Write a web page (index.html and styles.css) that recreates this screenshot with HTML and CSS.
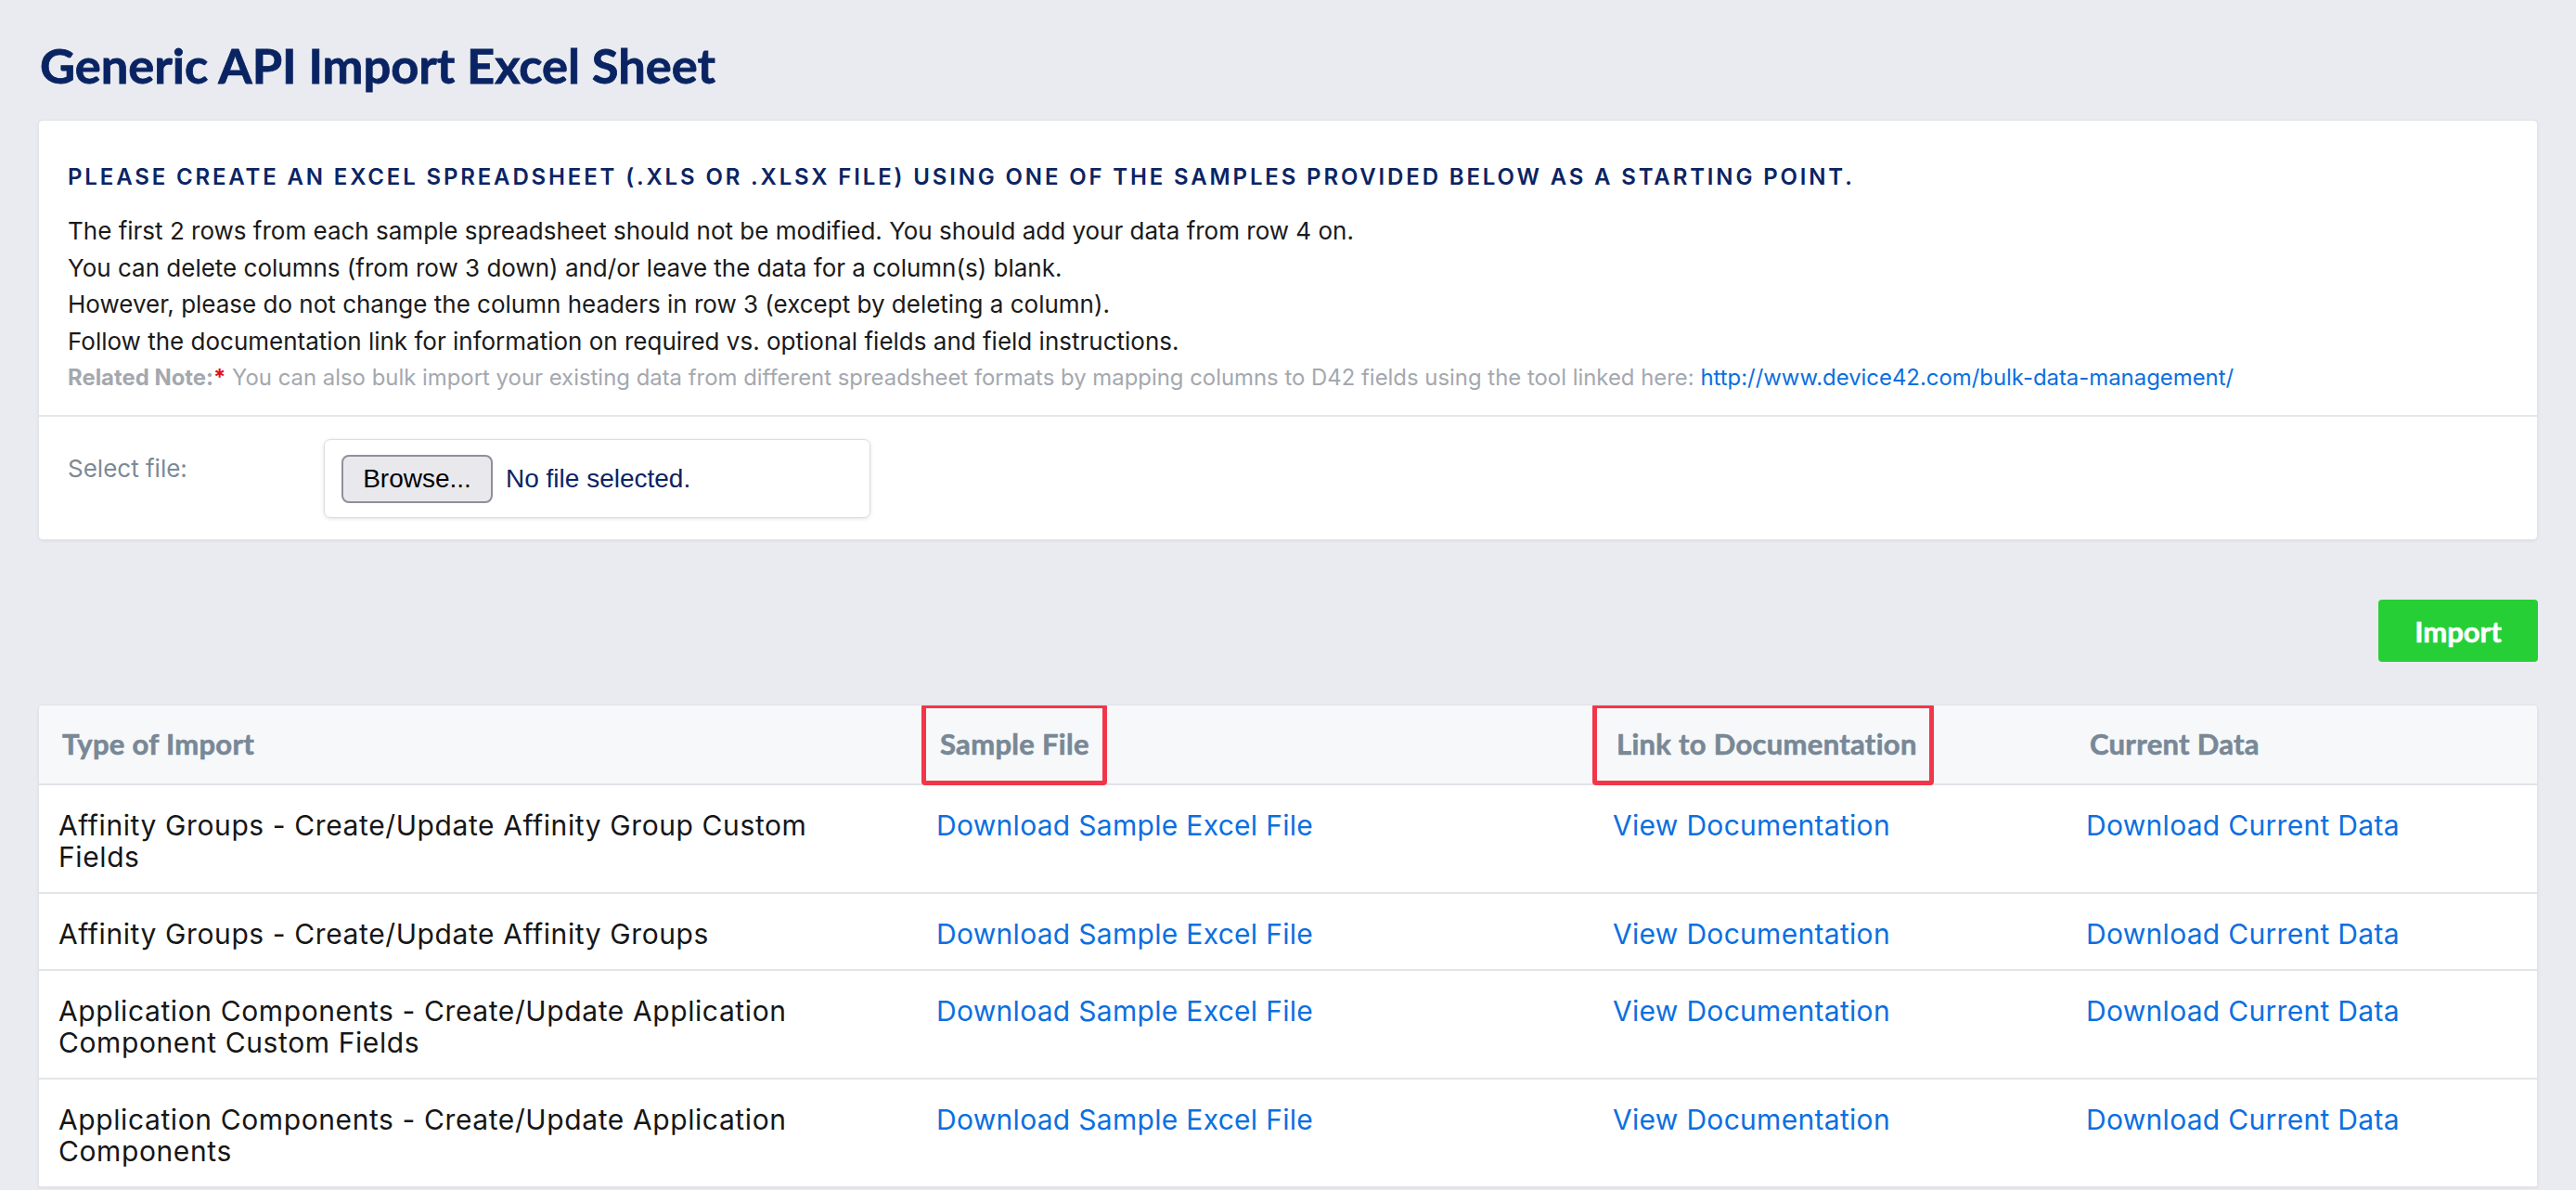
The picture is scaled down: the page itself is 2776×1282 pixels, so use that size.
FILE: index.html
```html
<!DOCTYPE html>
<html lang="en">
<head>
<meta charset="utf-8">
<title>Generic API Import Excel Sheet</title>
<link rel="stylesheet" href="styles.css">
</head>
<body>
<div class="page">
  <h1 class="title">Generic API Import Excel Sheet</h1>

  <section class="card info-card">
    <div class="info">
      <h2 class="info-heading">PLEASE CREATE AN EXCEL SPREADSHEET (.XLS OR .XLSX FILE) USING ONE OF THE SAMPLES PROVIDED BELOW AS A STARTING POINT.</h2>
      <p class="info-lines">The first 2 rows from each sample spreadsheet should not be modified. You should add your data from row 4 on.<br>You can delete columns (from row 3 down) and/or leave the data for a column(s) blank.<br>However, please do not change the column headers in row 3 (except by deleting a column).<br>Follow the documentation link for information on required vs. optional fields and field instructions.</p>
      <p class="note"><b class="note-label">Related Note:</b><span class="req">*</span> You can also bulk import your existing data from different spreadsheet formats by mapping columns to D42 fields using the tool linked here: <a class="note-link" href="#">http://www.device42.com/bulk-data-management/</a></p>
    </div>
    <div class="file-row">
      <label class="file-label">Select file:</label>
      <div class="file-box">
        <span class="browse">Browse...</span>
        <span class="file-status">No file selected.</span>
      </div>
    </div>
  </section>

  <div class="actions">
    <button class="import-btn" type="button">Import</button>
  </div>

  <section class="card table-card">
    <table class="imports">
      <colgroup>
        <col class="c1"><col class="c2"><col class="c3"><col class="c4">
      </colgroup>
      <thead>
        <tr>
          <th>Type of Import</th>
          <th>Sample File<span class="hl hl-sample"></span></th>
          <th>Link to Documentation<span class="hl hl-doc"></span></th>
          <th>Current Data</th>
        </tr>
      </thead>
      <tbody>
        <tr>
          <td class="type">Affinity Groups - Create/Update Affinity Group Custom Fields</td>
          <td><a href="#">Download Sample Excel File</a></td>
          <td><a href="#">View Documentation</a></td>
          <td><a href="#">Download Current Data</a></td>
        </tr>
        <tr>
          <td class="type">Affinity Groups - Create/Update Affinity Groups</td>
          <td><a href="#">Download Sample Excel File</a></td>
          <td><a href="#">View Documentation</a></td>
          <td><a href="#">Download Current Data</a></td>
        </tr>
        <tr>
          <td class="type">Application Components - Create/Update Application Component Custom Fields</td>
          <td><a href="#">Download Sample Excel File</a></td>
          <td><a href="#">View Documentation</a></td>
          <td><a href="#">Download Current Data</a></td>
        </tr>
        <tr>
          <td class="type">Application Components - Create/Update Application Components</td>
          <td><a href="#">Download Sample Excel File</a></td>
          <td><a href="#">View Documentation</a></td>
          <td><a href="#">Download Current Data</a></td>
        </tr>
      </tbody>
    </table>
  </section>
</div>
</body>
</html>
```

FILE: styles.css
```css
html, body {
  margin: 0;
  padding: 0;
}

body {
  background: #eaebf0;
  font-family: Inter, "Noto Sans", sans-serif;
  color: #171717;
}

.page {
  padding: 39px 41px 0;
}

.title {
  margin: 0;
  padding-left: 2px;
  font-family: Lato, "Noto Sans", sans-serif;
  font-weight: 700;
  font-size: 52.4px;
  line-height: 62px;
  color: #0a2463;
  -webkit-text-stroke: 0.8px #0a2463;
}

.card {
  background: #ffffff;
  border: 1px solid #e1e3e8;
  border-radius: 5px;
  box-shadow: 0 1px 3px rgba(0, 0, 0, 0.06);
}

.info-card {
  margin-top: 28px;
}

.info {
  padding: 46px 31px 23px;
  border-bottom: 2px solid #e4e6ea;
}

.info-heading {
  margin: 0;
  font-family: Inter, sans-serif;
  font-weight: 600;
  font-size: 24px;
  line-height: 30px;
  letter-spacing: 2.85px;
  color: #0a2463;
}

.info-lines {
  margin: 23px 0 0;
  font-size: 26px;
  line-height: 39.5px;
  color: #1a1a1a;
}

.note {
  margin: 3px 0 0;
  font-size: 23.9px;
  line-height: 34px;
  color: #a4a8af;
}

.note-label {
  font-weight: 700;
}

.req {
  color: #e0101e;
  font-weight: 700;
}

.note-link {
  color: #0b6fe0;
  text-decoration: none;
}

.file-row {
  display: flex;
  align-items: flex-start;
  padding: 24px 31px 23px;
}

.file-label {
  width: 276px;
  margin-top: 16px;
  font-size: 26px;
  line-height: 32px;
  color: #7d8a96;
}

.file-box {
  box-sizing: border-box;
  width: 589px;
  height: 85px;
  display: flex;
  align-items: center;
  gap: 14px;
  padding: 0 18px;
  border: 1px solid #dcdde0;
  border-radius: 7px;
  box-shadow: 0 1px 4px rgba(0, 0, 0, 0.12);
}

.browse {
  box-sizing: border-box;
  width: 163px;
  height: 52px;
  display: flex;
  align-items: center;
  justify-content: center;
  border: 2px solid #8f8f9d;
  border-radius: 8px;
  background: #e9e9ed;
  font-family: "Liberation Sans", Arial, sans-serif;
  font-size: 28px;
  color: #000000;
}

.file-status {
  font-family: "Liberation Sans", Arial, sans-serif;
  font-size: 28px;
  color: #0a2463;
}

.actions {
  display: flex;
  justify-content: flex-end;
  margin-top: 64px;
}

.import-btn {
  width: 172px;
  height: 67px;
  border: 0;
  border-radius: 4px;
  background: #27cf36;
  color: #ffffff;
  font-family: Lato, sans-serif;
  font-weight: 700;
  font-size: 31px;
  -webkit-text-stroke: 0.6px #ffffff;
}

.table-card {
  margin-top: 46px;
  overflow: hidden;
}

.imports {
  width: 100%;
  border-collapse: collapse;
  table-layout: fixed;
}

.c1 { width: 946px; }
.c2 { width: 729px; }
.c3 { width: 510px; }

.imports th {
  position: relative;
  text-align: left;
  background: #f7f8fa;
  padding: 23px 21px 25px 25px;
  border-bottom: 2px solid #e0e3e7;
  font-family: Lato, sans-serif;
  font-weight: 700;
  font-size: 31px;
  line-height: 36px;
  letter-spacing: 0.3px;
  color: #788896;
  -webkit-text-stroke: 0.6px #788896;
}

.imports td {
  vertical-align: top;
  padding: 26px 21px 21px;
  border-bottom: 2px solid #e2e4e8;
  font-size: 30px;
  line-height: 34px;
  letter-spacing: 0.6px;
  color: #161616;
}

.imports td.type {
  padding-right: 50px;
}

.imports td a {
  color: #0b6fe0;
  text-decoration: none;
  letter-spacing: 0.3px;
}

.hl {
  position: absolute;
  top: -2px;
  height: 88px;
  box-sizing: border-box;
  border: 5px solid #f2364a;
  border-radius: 4px;
}

.hl-sample {
  left: 5px;
  width: 200px;
}

.hl-doc {
  left: -1px;
  width: 368px;
}
```
